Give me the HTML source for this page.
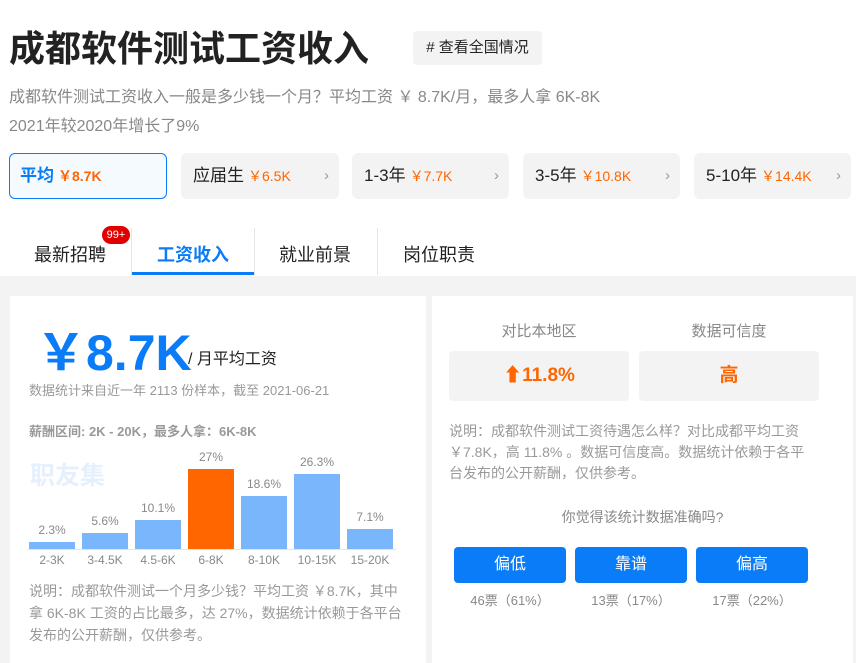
<!DOCTYPE html>
<html><head><meta charset="utf-8"><style>
*{margin:0;padding:0;box-sizing:border-box}
body{width:856px;height:663px;overflow:hidden;background:#fff;font-family:"Liberation Sans","Noto Sans CJK SC",sans-serif;position:relative;color:#333}
.a{position:absolute;white-space:nowrap}
.tab{position:absolute;top:153px;height:46px;border-radius:6px;background:#f3f3f3;font-size:17px;line-height:46px;padding-left:12px;color:#222}
.tab .y{color:#f60;font-size:14px;margin-left:4px}
.tab .ar{position:absolute;right:10px;top:0;color:#999;font-size:15px}
.bar{position:absolute;width:46px;background:#7ab6fb}
.pl{position:absolute;width:60px;text-align:center;font-size:12px;color:#888}
.btn{position:absolute;top:547px;width:112px;height:36px;background:#0a7cf7;border-radius:4px;color:#fff;font-size:16px;text-align:center;line-height:36px}
.vt{position:absolute;top:590px;width:112px;text-align:center;font-size:13px;color:#888}
</style></head><body>
<div class="a" style="left:9px;top:20px;font-size:36px;font-weight:bold;color:#222">成都软件测试工资收入</div>
<div class="a" style="left:413px;top:31px;width:129px;height:34px;background:#f3f3f3;border-radius:4px;font-size:15px;line-height:34px;text-align:center;color:#222"># 查看全国情况</div>
<div class="a" style="left:9px;top:83px;font-size:16px;color:#888">成都软件测试工资收入一般是多少钱一个月？平均工资 ￥ 8.7K/月，最多人拿 6K-8K</div>
<div class="a" style="left:9px;top:112px;font-size:16px;color:#888">2021年较2020年增长了9%</div>

<div class="tab" style="left:9px;width:158px;background:#f5faff;border:1px solid #0a7cf7;line-height:44px;padding-left:10px"><b style="color:#0a7cf7">平均</b><span class="y" style="font-weight:bold">￥8.7K</span></div>
<div class="tab" style="left:181px;width:158px">应届生<span class="y">￥6.5K</span><span class="ar">›</span></div>
<div class="tab" style="left:352px;width:157px">1-3年<span class="y">￥7.7K</span><span class="ar">›</span></div>
<div class="tab" style="left:523px;width:157px">3-5年<span class="y">￥10.8K</span><span class="ar">›</span></div>
<div class="tab" style="left:694px;width:157px">5-10年<span class="y">￥14.4K</span><span class="ar">›</span></div>

<div class="a" style="left:34px;top:241px;font-size:18px;color:#222">最新招聘</div>
<div class="a" style="left:102px;top:226px;width:28px;height:18px;border-radius:9px;background:#e10000;color:#fff;font-size:11px;line-height:18px;text-align:center">99+</div>
<div class="a" style="left:131px;top:228px;width:1px;height:47px;background:#e5e5e5"></div>
<div class="a" style="left:157px;top:241px;font-size:18px;font-weight:bold;color:#0a7cf7">工资收入</div>
<div class="a" style="left:132px;top:272px;width:122px;height:3px;background:#0a7cf7"></div>
<div class="a" style="left:254px;top:228px;width:1px;height:47px;background:#e5e5e5"></div>
<div class="a" style="left:279px;top:241px;font-size:18px;color:#222">就业前景</div>
<div class="a" style="left:377px;top:228px;width:1px;height:47px;background:#e5e5e5"></div>
<div class="a" style="left:403px;top:241px;font-size:18px;color:#222">岗位职责</div>

<div class="a" style="left:0;top:276px;width:856px;height:387px;background:#f3f3f3"></div>
<div class="a" style="left:10px;top:296px;width:416px;height:367px;background:#fff"></div>
<div class="a" style="left:432px;top:296px;width:421px;height:367px;background:#fff"></div>

<div class="a" style="left:36px;top:313px;font-size:50px;font-weight:bold;color:#0a7cf7">￥8.7K</div>
<div class="a" style="left:188px;top:345px;font-size:16px;color:#222">/ 月平均工资</div>
<div class="a" style="left:29px;top:380px;font-size:13px;color:#999">数据统计来自近一年 2113 份样本，截至 2021-06-21</div>
<div class="a" style="left:29px;top:421px;font-size:13px;color:#999;font-weight:bold">薪酬区间: 2K - 20K，最多人拿：6K-8K</div>
<div class="a" style="left:30px;top:456px;font-size:25px;font-weight:bold;color:#e6f0fd">职友集</div>

<div class="bar" style="left:29px;top:542px;height:7px"></div>
<div class="bar" style="left:82px;top:533px;height:16px"></div>
<div class="bar" style="left:135px;top:520px;height:29px"></div>
<div class="bar" style="left:188px;top:469px;height:80px;background:#f60"></div>
<div class="bar" style="left:241px;top:496px;height:53px"></div>
<div class="bar" style="left:294px;top:474px;height:75px"></div>
<div class="bar" style="left:347px;top:529px;height:20px"></div>
<div class="pl" style="left:22px;top:523px">2.3%</div>
<div class="pl" style="left:75px;top:514px">5.6%</div>
<div class="pl" style="left:128px;top:501px">10.1%</div>
<div class="pl" style="left:181px;top:450px">27%</div>
<div class="pl" style="left:234px;top:477px">18.6%</div>
<div class="pl" style="left:287px;top:455px">26.3%</div>
<div class="pl" style="left:340px;top:510px">7.1%</div>
<div class="a" style="left:27px;top:549px;width:369px;height:1px;background:#e5e5e5"></div>
<div class="pl" style="left:22px;top:553px">2-3K</div>
<div class="pl" style="left:75px;top:553px">3-4.5K</div>
<div class="pl" style="left:128px;top:553px">4.5-6K</div>
<div class="pl" style="left:181px;top:553px">6-8K</div>
<div class="pl" style="left:234px;top:553px">8-10K</div>
<div class="pl" style="left:287px;top:553px">10-15K</div>
<div class="pl" style="left:340px;top:553px">15-20K</div>
<div class="a" style="left:29px;top:580px;width:380px;white-space:normal;font-size:14px;line-height:22px;color:#999">说明：成都软件测试一个月多少钱？平均工资 ￥8.7K，其中拿 6K-8K 工资的占比最多，达 27%，数据统计依赖于各平台发布的公开薪酬，仅供参考。</div>

<div class="a" style="left:449px;top:320px;width:180px;text-align:center;font-size:15px;color:#888">对比本地区</div>
<div class="a" style="left:639px;top:320px;width:180px;text-align:center;font-size:15px;color:#888">数据可信度</div>
<div class="a" style="left:449px;top:351px;width:180px;height:50px;background:#f3f3f3;border-radius:4px;text-align:center;line-height:50px;font-size:19px;font-weight:bold;color:#f60">⬆11.8%</div>
<div class="a" style="left:639px;top:351px;width:180px;height:50px;background:#f3f3f3;border-radius:4px;text-align:center;line-height:50px;font-size:19px;font-weight:bold;color:#f60">高</div>
<div class="a" style="left:449px;top:421px;width:365px;white-space:normal;font-size:14px;line-height:21px;color:#999">说明：成都软件测试工资待遇怎么样？对比成都平均工资 ￥7.8K，高 11.8% 。数据可信度高。数据统计依赖于各平台发布的公开薪酬，仅供参考。</div>
<div class="a" style="left:432px;top:507px;width:421px;text-align:center;font-size:14px;color:#888">你觉得该统计数据准确吗?</div>
<div class="btn" style="left:454px">偏低</div>
<div class="btn" style="left:575px">靠谱</div>
<div class="btn" style="left:696px">偏高</div>
<div class="vt" style="left:454px">46票（61%）</div>
<div class="vt" style="left:575px">13票（17%）</div>
<div class="vt" style="left:696px">17票（22%）</div>
</body></html>
